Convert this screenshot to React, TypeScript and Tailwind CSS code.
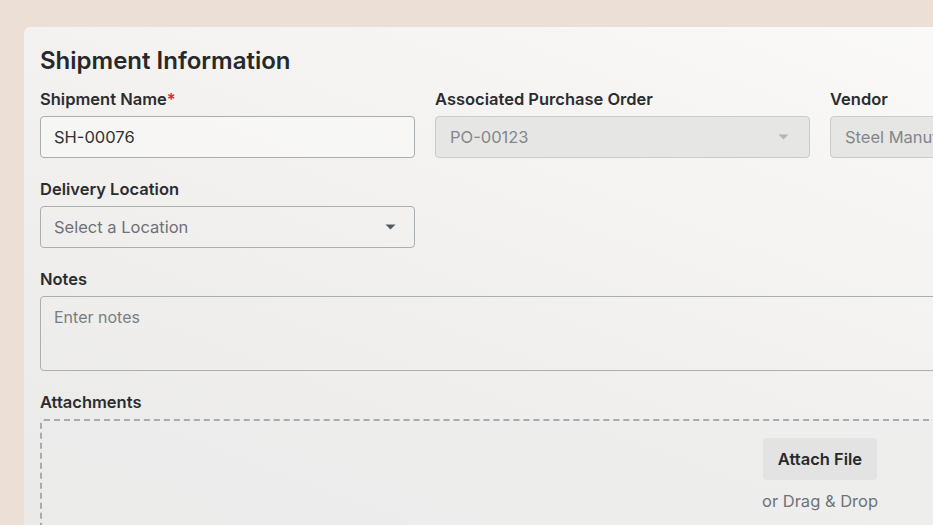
import React from 'react'

const Caret = ({ muted }: { muted?: boolean }) => (
  <svg width="11" height="6" viewBox="0 0 11 6" className={muted ? 'text-[#b3b4b5]' : 'text-[#555a5e]'}>
    <path d="M0.5 0.5h10L5.5 5.5z" fill="currentColor" />
  </svg>
)

const Label = ({ children, required }: { children: React.ReactNode; required?: boolean }) => (
  <p className='text-[16.5px] font-semibold text-[#2b2d2f] leading-[20px] mb-[7px]'>
    {children}
    {required && <span className='text-[#e0262b]'>*</span>}
  </p>
)

const App: React.FC = () => {
  return (
    <div className='h-[525px] w-[933px] overflow-hidden bg-[#ecdfd6] pt-[27px] pl-[24px] font-["Inter",sans-serif]'>
      <div className='w-[1592px] rounded-[6px] bg-gradient-to-bl from-[#ffffff] via-[#f3f2f0] to-[#e8e8e7] px-[16px] pt-[19px] pb-[40px]'>
        <h2 className='text-[24px] font-semibold text-[#26282a] leading-[30px] mb-[13px]'>Shipment Information</h2>

        <div className='grid grid-cols-4 gap-x-[20px]'>
          <div>
            <Label required>Shipment Name</Label>
            <div className='h-[42px] rounded-[4px] border border-[#a9afb3] bg-[#fafaf9]/60 px-[13px] flex items-center text-[16.5px] text-[#2f3133]'>
              SH-00076
            </div>
          </div>
          <div>
            <Label>Associated Purchase Order</Label>
            <div className='h-[42px] rounded-[4px] border border-[#c9cbcc] bg-[#e6e6e5] pl-[14px] pr-[20px] flex items-center justify-between text-[16.5px] text-[#84878a]'>
              PO-00123
              <Caret muted />
            </div>
          </div>
          <div>
            <Label>Vendor</Label>
            <div className='h-[42px] rounded-[4px] border border-[#c9cbcc] bg-[#e6e6e5] px-[14px] flex items-center text-[16.5px] text-[#84878a] whitespace-nowrap overflow-hidden'>
              Steel Manufacturing Co.
            </div>
          </div>
          <div />
        </div>

        <div className='grid grid-cols-4 gap-x-[20px] mt-[21px]'>
          <div>
            <Label>Delivery Location</Label>
            <div className='h-[42px] rounded-[4px] border border-[#a9afb3] px-[13px] pr-[18px] flex items-center justify-between text-[16.5px] text-[#6e7276]'>
              Select a Location
              <Caret />
            </div>
          </div>
        </div>

        <div className='mt-[21px]'>
          <Label>Notes</Label>
          <div className='h-[75px] rounded-[4px] border border-[#a9afb3] px-[13px] pt-[9px] text-[16px] leading-[22px] text-[#7a7d80]'>
            Enter notes
          </div>
        </div>

        <div className='mt-[21px]'>
          <Label>Attachments</Label>
          <div className='h-[160px] rounded-[4px] border-2 border-dashed border-[#a6acaf] bg-[#ededec]/60 flex flex-col items-center pt-[17px]'>
            <button className='h-[42px] px-[15px] rounded-[4px] bg-[#e3e3e3] text-[16.5px] font-semibold text-[#27292b]'>
              Attach File
            </button>
            <p className='mt-[10px] text-[16.5px] leading-[22px] text-[#6f7377]'>or Drag &amp; Drop</p>
          </div>
        </div>
      </div>
    </div>
  )
}

export default App
